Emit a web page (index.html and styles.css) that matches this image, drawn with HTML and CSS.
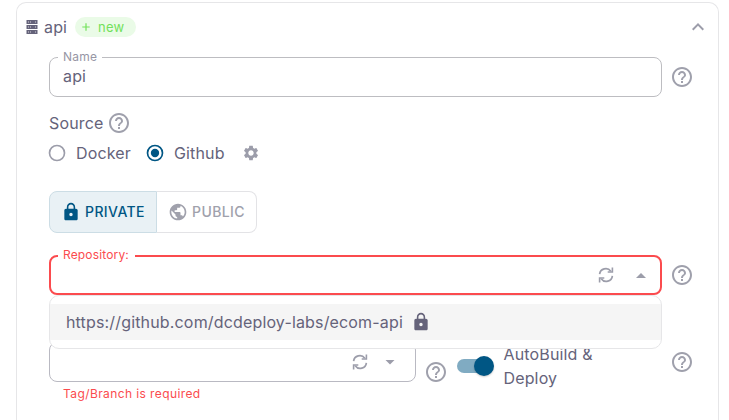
FILE: index.html
```html
<!DOCTYPE html>
<html lang="en">
<head>
<meta charset="utf-8">
<title>Service</title>
<link rel="stylesheet" href="styles.css">
</head>
<body>
<svg width="0" height="0" class="defs" aria-hidden="true">
  <symbol id="help" viewBox="0 0 24 24"><path d="M11 18h2v-2h-2v2zm1-16C6.48 2 2 6.48 2 12s4.48 10 10 10 10-4.48 10-10S17.52 2 12 2zm0 18c-4.41 0-8-3.59-8-8s3.59-8 8-8 8 3.59 8 8-3.59 8-8 8zm0-14c-2.21 0-4 1.79-4 4h2c0-1.1.9-2 2-2s2 .9 2 2c0 2-3 1.75-3 5h2c0-2.25 3-2.5 3-5 0-2.21-1.79-4-4-4z"/></symbol>
  <symbol id="lock" viewBox="0 0 24 24"><path d="M18 8h-1V6c0-2.760-2.240-5-5-5S7 3.240 7 6v2H6c-1.100 0-2 .9-2 2v10c0 1.100.9 2 2 2h12c1.100 0 2-.9 2-2V10c0-1.100-.9-2-2-2zm-6 9c-1.100 0-2-.9-2-2s.9-2 2-2 2 .9 2 2-.9 2-2 2zm3.100-9H8.900V6c0-1.710 1.390-3.100 3.100-3.100 1.710 0 3.100 1.390 3.100 3.100v2z"/></symbol>
  <symbol id="sync" viewBox="0 0 16 16"><path d="M1.600 7.200A6.200 6.200 0 0 1 12.800 4.300M14.400 8.800A6.200 6.200 0 0 1 3.200 11.700" fill="none" stroke="currentColor" stroke-width="1.700"/><path d="M15.200.6v5.200H9.700V4.300h3.900V.6zM.8 15.400v-5.200h5.500v1.500H2.400v3.700z"/></symbol>
</svg>
<main class="card">
  <header class="card-head">
    <svg class="server" viewBox="0 0 12 14"><path d="M.5 0h11v4H.5zM.5 5h11v4H.5zM.5 10h11v4H.5z"/><path class="slots" d="M2 1.500h1v1H2zM4 1.500h1v1H4zM9 1.500h1v1H9zM2 6.500h1v1H2zM4 6.500h1v1H4zM9 6.500h1v1H9zM2 11.500h1v1H2zM4 11.500h1v1H4zM9 11.500h1v1H9z"/></svg>
    <span class="title">api</span>
    <span class="chip"><svg viewBox="0 0 8 8"><path d="M4 .3v7.400M.3 4h7.400"/></svg>new</span>
    <svg class="chevron" viewBox="0 0 24 24"><path d="m12 8-6 6 1.410 1.410L12 10.830l4.590 4.580L18 14z"/></svg>
  </header>

  <section class="form">
    <div class="row">
      <fieldset class="field name"><legend>Name</legend><div class="value">api</div></fieldset>
      <svg class="help"><use href="#help"/></svg>
    </div>

    <div class="source">Source<svg class="help"><use href="#help"/></svg></div>
    <div class="radios">
      <label><svg class="radio" viewBox="0 0 24 24"><circle cx="12" cy="12" r="9"/></svg>Docker</label>
      <label><svg class="radio on" viewBox="0 0 24 24"><circle cx="12" cy="12" r="9"/><circle class="dot" cx="12" cy="12" r="5"/></svg>Github</label>
      <svg class="gear" viewBox="0 0 24 24"><path d="M19.140 12.940c.04-.3.06-.61.06-.94 0-.32-.02-.64-.07-.94l2.030-1.580c.18-.14.23-.41.12-.61l-1.920-3.320c-.12-.22-.37-.29-.59-.22l-2.390.96c-.5-.38-1.030-.7-1.620-.94l-.36-2.540c-.04-.24-.24-.41-.48-.41h-3.840c-.24 0-.43.17-.47.41l-.36 2.540c-.59.24-1.130.57-1.620.94l-2.390-.96c-.22-.08-.47 0-.59.22L2.740 8.870c-.12.21-.08.47.12.61l2.030 1.580c-.05.3-.09.63-.09.94s.02.64.07.94l-2.030 1.580c-.18.14-.23.41-.12.61l1.920 3.320c.12.22.37.29.59.22l2.390-.96c.5.38 1.030.7 1.620.94l.36 2.540c.05.24.24.41.48.41h3.840c.24 0 .44-.17.47-.41l.36-2.540c.59-.24 1.130-.56 1.620-.94l2.390.96c.22.08.47 0 .59-.22l1.920-3.320c.12-.22.07-.47-.12-.61l-2.010-1.580zM12 15.600c-1.980 0-3.600-1.620-3.600-3.600s1.620-3.600 3.600-3.600 3.600 1.620 3.600 3.600-1.620 3.600-3.600 3.600z"/></svg>
    </div>

    <div class="toggle">
      <button class="selected"><svg><use href="#lock"/></svg>PRIVATE</button>
      <button><svg viewBox="0 0 24 24"><path d="M12 2C6.480 2 2 6.480 2 12s4.480 10 10 10 10-4.480 10-10S17.520 2 12 2zm-1 17.930c-3.950-.49-7-3.850-7-7.930 0-.62.08-1.210.21-1.790L9 15v1c0 1.100.9 2 2 2v1.930zm6.900-2.540c-.26-.81-1-1.390-1.900-1.390h-1v-3c0-.55-.45-1-1-1H8v-2h2c.55 0 1-.45 1-1V7h2c1.100 0 2-.9 2-2v-.41c2.930 1.190 5 4.060 5 7.410 0 2.080-.8 3.970-2.100 5.390z"/></svg>PUBLIC</button>
    </div>

    <div class="row repo-row">
      <fieldset class="field error"><legend>Repository:</legend>
        <div class="actions"><svg class="sync"><use href="#sync"/></svg><i class="caret up"></i></div>
      </fieldset>
      <svg class="help"><use href="#help"/></svg>
      <div class="menu"><div class="option">https://github.com/dcdeploy-labs/ecom-api<svg><use href="#lock"/></svg></div></div>
    </div>

    <div class="branch-row">
      <div class="branch">
        <div class="select"><div class="actions"><svg class="sync"><use href="#sync"/></svg><i class="caret"></i></div></div>
        <p class="message">Tag/Branch is required</p>
      </div>
      <svg class="help low"><use href="#help"/></svg>
      <span class="switch"></span>
      <span class="switch-label">AutoBuild &amp; Deploy</span>
      <svg class="help last"><use href="#help"/></svg>
    </div>
  </section>
</main>
</body>
</html>
```

FILE: styles.css
```css
* { box-sizing: border-box; }
body {
  margin: 0;
  height: 420px;
  display: flow-root;
  background: #fff;
  color: #65637a;
  font: 16px/24px Inter, sans-serif;
  letter-spacing: 0.15px;
}
svg { display: block; flex: none; fill: currentColor; }
.defs { position: absolute; }
.card {
  margin: 2px 10px 0 16px;
  height: 418px;
  border: 1px solid #e6e6e8;
  border-bottom: 0;
  border-radius: 10px 10px 0 0;
}
.card-head {
  display: flex;
  align-items: center;
  height: 48px;
  padding: 0 8px 0 9px;
}
.server { width: 12px; height: 14px; }
.server .slots { fill: #d5d4dc; }
.title { margin-left: 6px; }
.chip {
  display: flex;
  align-items: center;
  gap: 8px;
  width: 61px;
  height: 20px;
  margin-left: 8px;
  padding-left: 7px;
  border-radius: 10px;
  background: #eafbe7;
  color: #72e15b;
  font-size: 13px;
  line-height: 18px;
  letter-spacing: 0.15px;
}
.chip svg { width: 8px; height: 8px; stroke: currentColor; stroke-width: 1.2; }
.chevron { width: 24px; height: 24px; margin-left: auto; color: #9c9daa; }
.form { padding: 6px 24px 0 32px; }
.row { display: flex; align-items: center; gap: 8px; height: 40px; }
.help { width: 24px; height: 24px; color: #9fa0ac; }
.field {
  width: 613px;
  height: 46px;
  margin: -6px 0 0;
  padding: 0 13px;
  border: 1px solid #bdbdc1;
  border-radius: 8px;
  min-width: 0;
}
.field legend {
  height: 12px;
  margin-left: -5px;
  padding: 0 5px;
  color: #9796a5;
  font-size: 12px;
  line-height: 12px;
  letter-spacing: 0.2px;
}
.value { margin-top: 1px; }
.source { display: flex; align-items: center; gap: 4px; height: 24px; margin-top: 14px; }
.radios { display: flex; align-items: center; height: 24px; margin-top: 6px; }
.radios label { display: flex; align-items: center; gap: 9px; margin-right: 14px; }
.radios label:first-child { margin-left: -2px; }
.radio { width: 20px; height: 20px; fill: none; stroke: #9c9daa; stroke-width: 2; }
.radio.on { stroke: #005684; }
.radio .dot { fill: #005684; stroke: none; }
.gear { width: 18px; height: 18px; margin-left: 3px; color: #9c9daa; }
.toggle { display: flex; width: 208px; height: 42px; margin-top: 26px; }
.toggle button {
  display: flex;
  align-items: center;
  gap: 4px;
  width: 100px;
  padding: 0 0 0 11px;
  border: 1px solid #e3e3e6;
  border-left: 0;
  border-radius: 0 8px 8px 0;
  background: #fff;
  color: #a0a1ac;
  font: 500 14px/24px Inter, sans-serif;
  letter-spacing: 0.4px;
}
.toggle button.selected {
  width: 108px;
  border: 1px solid #ccdde5;
  border-radius: 8px 0 0 8px;
  background: #e9f1f5;
  color: #005684;
}
.toggle svg { width: 20px; height: 20px; }
.repo-row { position: relative; margin-top: 22px; }
.field.error { height: 45px; margin-top: -5px; border: 2px solid #fb4b4e; padding: 0 12px; }
.field.error legend { padding-right: 6px; color: #fb4b4e; line-height: 10px; letter-spacing: 0.15px; }
.actions { display: flex; align-items: center; justify-content: flex-end; }
.field .actions { height: 24px; padding-right: 2px; margin-top: 1px; }
.sync { width: 16px; height: 16px; color: #9c9daa; }
.caret {
  width: 10px;
  height: 5px;
  margin-left: 22px;
  background: #9c9daa;
  clip-path: polygon(0 0, 100% 0, 50% 100%);
}
.caret.up { transform: rotate(180deg); }
.menu {
  position: absolute;
  z-index: 2;
  top: 40px;
  left: 0;
  width: 613px;
  height: 54px;
  padding: 8px 0;
  border: 1px solid #e6e6e8;
  border-radius: 10px;
  background: #fff;
}
.option { display: flex; align-items: center; gap: 8px; height: 36px; padding-left: 16px; background: #f5f5f5; letter-spacing: 0.16px; }
.option svg { width: 20px; height: 20px; }
.branch-row { display: flex; align-items: flex-start; margin-top: 47px; }
.branch { width: 367px; }
.select { height: 40px; padding: 0 20px; border: 1px solid #b9b9c2; border-radius: 8px; }
.select .actions { height: 38px; }
.select .caret { margin-left: 17px; }
.message { margin: 3px 0 0 14px; color: #fb4b4e; font-size: 12px; line-height: 18px; letter-spacing: 0.4px; }
.help.low { margin: 18px 0 0 8px; }
.switch {
  display: flex;
  align-items: center;
  justify-content: flex-end;
  width: 34px;
  height: 14px;
  margin: 17px 0 0 9px;
  border-radius: 7px;
  background: #80abc2;
}
.switch::after {
  content: "";
  width: 20px;
  height: 20px;
  margin-right: -3px;
  border-radius: 50%;
  background: #005684;
  box-shadow: 0 1px 2px #0003;
  flex: none;
}
.switch-label { width: 110px; margin-left: 12.5px; }
.help.last { margin: 8px 0 0 auto; }
```
